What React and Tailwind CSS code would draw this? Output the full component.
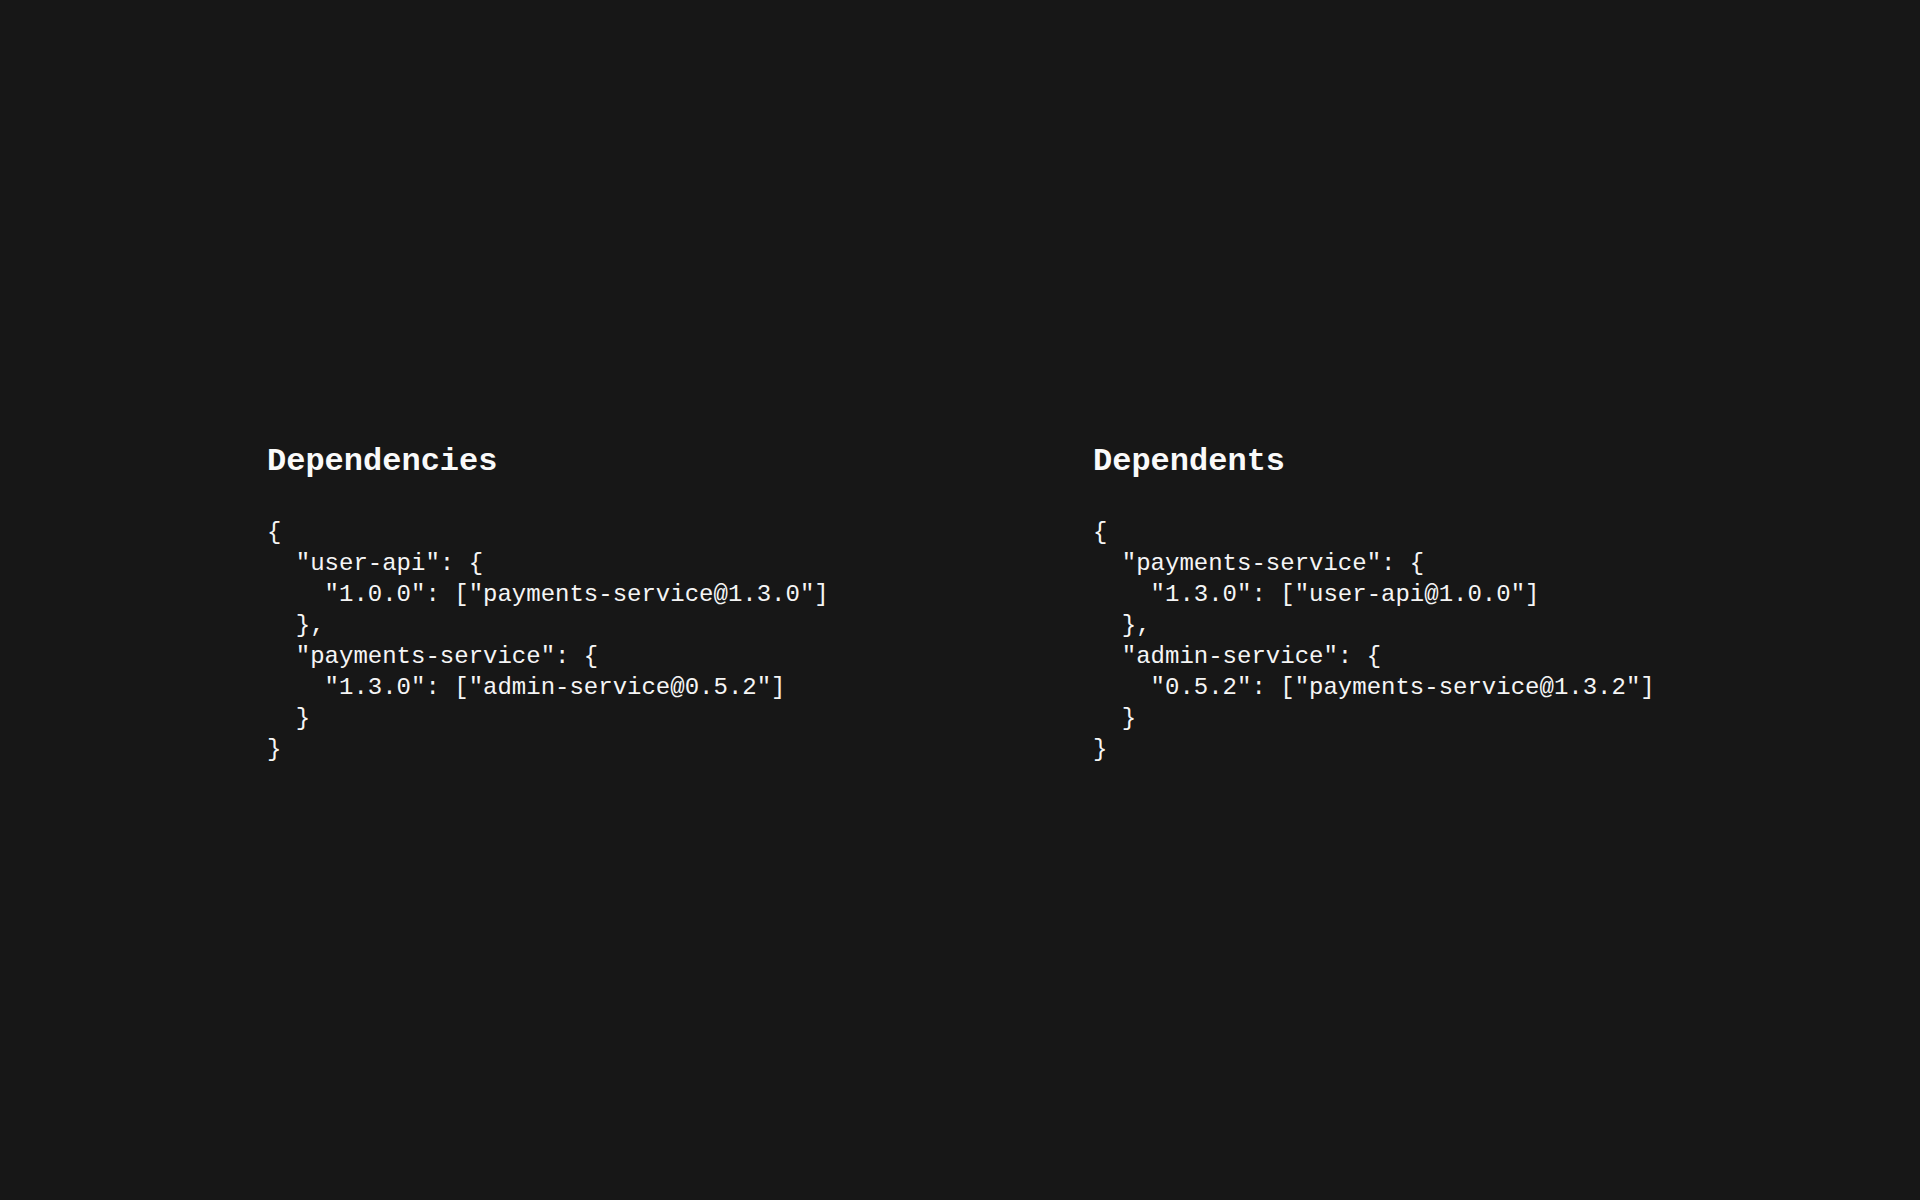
const dependencies = `{
  "user-api": {
    "1.0.0": ["payments-service@1.3.0"]
  },
  "payments-service": {
    "1.3.0": ["admin-service@0.5.2"]
  }
}`

const dependents = `{
  "payments-service": {
    "1.3.0": ["user-api@1.0.0"]
  },
  "admin-service": {
    "0.5.2": ["payments-service@1.3.2"]
  }
}`

function Panel({ title, json, className = '' }) {
  return (
    <section className={className}>
      <h2 className="text-[32px] leading-[40px] font-bold text-neutral-50">{title}</h2>
      <pre className="mt-[35px] text-[24px] leading-[31px] text-neutral-100 whitespace-pre font-[inherit]">
        {json}
      </pre>
    </section>
  )
}

export default function App() {
  return (
    <div
      className="min-h-screen bg-[#171717] flex items-center pt-[7px]"
      style={{ fontFamily: '"Liberation Mono", "DejaVu Sans Mono", monospace' }}
    >
      <div className="flex w-full pl-[267px]">
        <Panel title="Dependencies" json={dependencies} className="w-[826px] shrink-0" />
        <Panel title="Dependents" json={dependents} />
      </div>
    </div>
  )
}
